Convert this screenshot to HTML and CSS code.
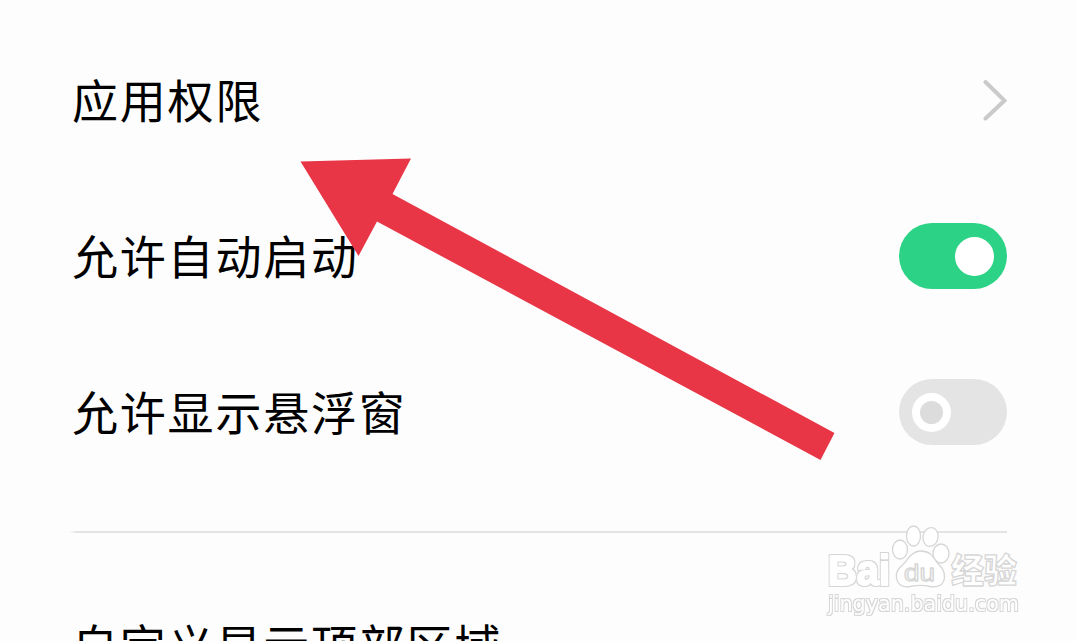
FILE: index.html
```
<!DOCTYPE html>
<html lang="zh-CN">
<head>
    <meta charset="UTF-8">
    <meta name="viewport" content="width=device-width, initial-scale=1.0">
    <title>应用权限</title>
    <link rel="stylesheet" href="styles.css">
</head>
<body>
    <div class="settings">
        <div class="row">
            <span class="label">应用权限</span>
            <svg class="chevron" width="26" height="44" viewBox="0 0 26 44">
                <path d="M4.500 4L23.500 22.500L4.500 40.500"/>
            </svg>
        </div>
        <div class="row">
            <span class="label">允许自动启动</span>
            <div class="switch on"><div class="knob"></div></div>
        </div>
        <div class="row">
            <span class="label">允许显示悬浮窗</span>
            <div class="switch"><div class="knob"></div></div>
        </div>
        <div class="divider"></div>
        <div class="row">
            <span class="label">自定义显示顶部区域</span>
        </div>
    </div>

    <!-- Arrow pointing at the permissions row -->
    <svg class="arrow" width="1077" height="641" viewBox="0 0 1077 641">
        <polygon points="300.500,161.500 411,158.500 392.500,194 834.500,433 820.500,460 377,221.500 358.500,256"/>
    </svg>

    <!-- Watermark -->
    <svg class="watermark" width="220" height="110" viewBox="820 515 220 110">
        <filter id="outline" x="-5%" y="-10%" width="110%" height="120%">
            <feMorphology in="SourceAlpha" operator="dilate" radius="1" result="fat"/>
            <feFlood flood-color="#d6d6d6"/>
            <feComposite in2="fat" operator="in" result="edge"/>
            <feMerge>
                <feMergeNode in="edge"/>
                <feMergeNode in="SourceGraphic"/>
            </feMerge>
        </filter>
        <g class="brand">
            <text class="latin" x="828" y="585" font-size="43" textLength="62" lengthAdjust="spacingAndGlyphs">Bai</text>
            <ellipse cx="900" cy="549.500" rx="7.500" ry="9.500"/>
            <ellipse cx="913.500" cy="536" rx="7" ry="10"/>
            <ellipse cx="930.500" cy="537" rx="7.500" ry="9.500" transform="rotate(10 930.500 537)"/>
            <ellipse cx="941" cy="553.500" rx="8" ry="9.500"/>
            <path d="M920.500 551C912 551 909 558 903.500 564C898 569 895.500 572 896.500 578C898 586 904 587.500 910 586.500C917 585 924 585 930 586.500C938 588 944 585 944.500 577C945 570 940 566 936 561C932 555 929 551 920.500 551Z"/>
            <text class="du" x="904" y="581" font-size="24" textLength="31" lengthAdjust="spacingAndGlyphs">du</text>
            <text class="cjk" x="951" y="583" font-size="34" textLength="66" lengthAdjust="spacingAndGlyphs">经验</text>
            <text class="site" x="828" y="611" font-size="20.500" textLength="191" lengthAdjust="spacingAndGlyphs">jingyan.baidu.com</text>
        </g>
    </svg>
</body>
</html>
```
FILE: styles.css
```
* {
    margin: 0;
    padding: 0;
    box-sizing: border-box;
}

body {
    position: relative;
    height: 641px;
    overflow: hidden;
    background: #fdfdfd;
    font-family: "Noto Sans CJK SC", sans-serif;
}

.settings {
    height: 641px;
    padding: 22px 70px 0 72px;
    overflow: hidden;
}

.row {
    display: flex;
    align-items: center;
    justify-content: space-between;
    height: 156px;
}

.label {
    padding-bottom: 5px;
    font-size: 46px;
    line-height: 64px;
    letter-spacing: 1.8px;
    color: #000;
    white-space: nowrap;
}

.chevron path {
    fill: none;
    stroke: #cacaca;
    stroke-width: 4;
    stroke-linecap: round;
}

.switch {
    display: flex;
    align-items: center;
    width: 108px;
    height: 66px;
    padding: 0 13px;
    border-radius: 33px;
    background: #e4e4e4;
}

.switch .knob {
    width: 39px;
    height: 39px;
    border: 8px solid #fff;
    border-radius: 50%;
    background: #dcdcdc;
}

.switch.on {
    justify-content: flex-end;
    background: #2cd285;
}

.switch.on .knob {
    background: #fff;
}

.divider {
    height: 2px;
    margin: 41px 0 34px -3px;
    background: linear-gradient(to right, #fdfdfd, #e4e4e4 8px);
}

.arrow {
    position: absolute;
    top: 0;
    left: 0;
    fill: #e93646;
}

.watermark {
    position: absolute;
    top: 515px;
    left: 820px;
}

.brand {
    fill: #fff;
    stroke: #d6d6d6;
    stroke-width: 1.3;
    stroke-linejoin: round;
}

/* fat white letters with a thin grey outline */
.latin {
    font-family: "Liberation Sans", Arial, sans-serif;
    font-weight: bold;
    stroke: #fff;
    stroke-width: 2;
    filter: url(#outline);
}

.du {
    font-family: "Liberation Sans", Arial, sans-serif;
}

.cjk {
    font-family: "Noto Sans CJK SC", sans-serif;
    font-weight: 900;
}

.site {
    font-family: "DejaVu Sans", sans-serif;
    stroke: none;
    filter: url(#outline);
}
```
